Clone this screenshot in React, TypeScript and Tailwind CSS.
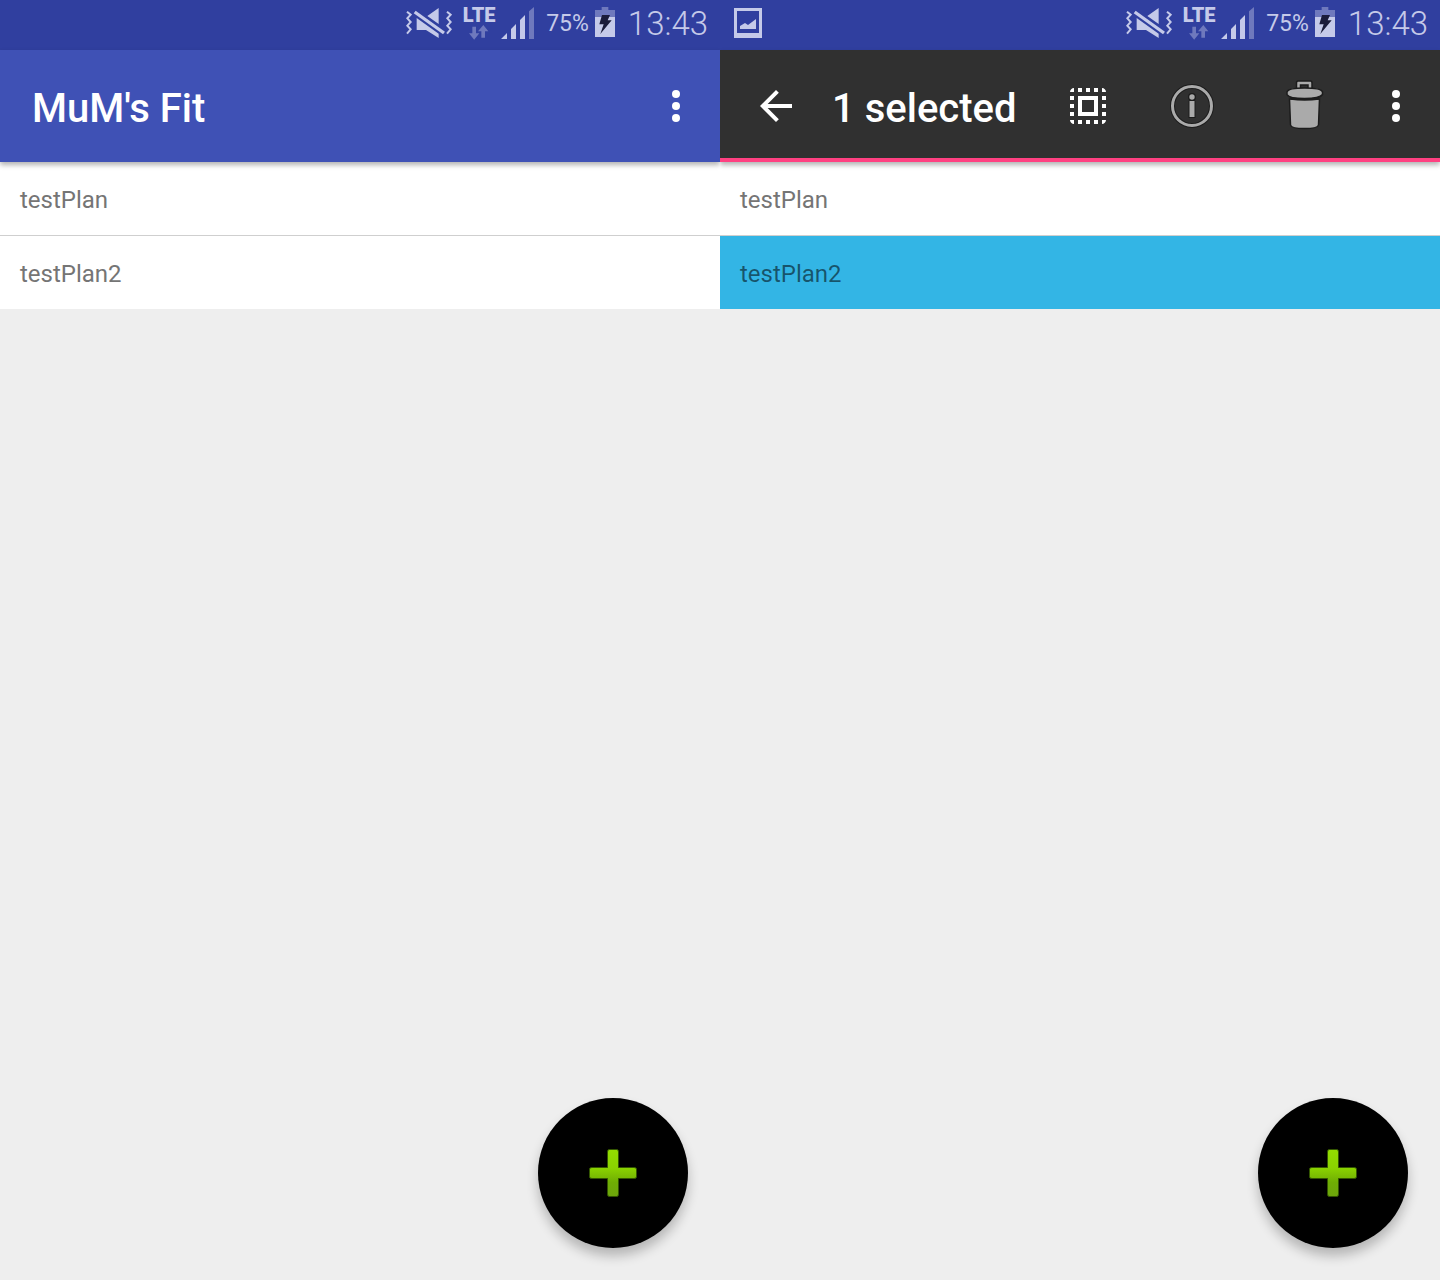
import React from "react";

function MuteIcon() {
  return (
    <svg className="h-[30px] w-[46px] shrink-0" viewBox="24 24 138 90" aria-label="Silent mode">
      <g fill="none" stroke="#c5cae9" strokeWidth="6">
        <path d="M27 35L38 44L28 55L38 66L28 77L38 88L27 101" />
        <path d="M147 35L158 44L148 55L158 66L148 77L158 88L147 101" />
        <path d="M50 36L138 99" strokeWidth="10" />
      </g>
      <path fill="#c5cae9" d="M88 48L122 24V72ZM56 54L122 101V114L84 90H56Z" />
    </svg>
  );
}

function LteIcon() {
  return (
    <span className="flex w-[34px] shrink-0 flex-col items-center text-xl leading-4 font-black text-[#c5cae9]">
      LTE
      <svg className="mt-[2px] h-[15px] w-5" viewBox="217 77 60 45" aria-hidden="true">
        <path
          fill="#6f79bd"
          d="M227 82H238V102H248L232.500 121L217 102H227ZM254 115H265V96H275L260 77L244 96H254Z"
        />
      </svg>
    </span>
  );
}

function SignalIcon() {
  return (
    <svg className="h-8 w-[33px] shrink-0" viewBox="309 21 99 96" aria-label="Signal strength">
      <path fill="#c5cae9" d="M309 117L327 99V117ZM339 117V87L354 72V117ZM366 117V60L381 45V117Z" />
      <path fill="#6f79bd" d="M393 117V34L408 21V117Z" />
    </svg>
  );
}

function BatteryIcon() {
  return (
    <svg className="h-[30px] w-5 shrink-0" viewBox="165 21 60 90" aria-label="Charging">
      <path fill="#6f79bd" d="M165 30H185V21H205V30H225V51H165Z" />
      <path fill="#c5cae9" d="M165 51H225V111H165Z" />
      <path fill="#1b1c3a" d="M186 45H210L203 61H215L181 102L191 73H178Z" />
    </svg>
  );
}

function PictureIcon() {
  return (
    <svg className="h-[30px] w-7 shrink-0" viewBox="0 0 28 30" aria-label="Screenshot saved">
      <path fill="#c5cae9" fillRule="evenodd" d="M0 0H28V30H0ZM3 3V25H25V3Z" />
      <path fill="#c5cae9" d="M6 21V18L11 15L14 17L22 11V21Z" />
    </svg>
  );
}

function StatusBar({ saved = false }: { saved?: boolean }) {
  return (
    <div className="flex h-[50px] items-center justify-between bg-[#303f9f] pr-3 pl-[14px] pb-1 text-[#c5cae9]">
      <div>{saved && <PictureIcon />}</div>
      <div className="flex items-center">
        <MuteIcon />
        <div className="ml-[10px]"><LteIcon /></div>
        <div className="ml-[5px]"><SignalIcon /></div>
        <span className="ml-3 pt-[2px] text-[23px] font-normal">75%</span>
        <div className="ml-[6px] pb-[2px]"><BatteryIcon /></div>
        <span className="ml-[13px] pt-[2px] text-[33px] leading-10 font-light">13:43</span>
      </div>
    </div>
  );
}

function MoreButton() {
  return (
    <button type="button" aria-label="More options" className="mr-2 flex h-12 w-[72px] shrink-0 items-center justify-center">
      <svg className="h-8 w-2" viewBox="0 0 8 32" fill="white">
        <circle cx="4" cy="4" r="4" />
        <circle cx="4" cy="16" r="4" />
        <circle cx="4" cy="28" r="4" />
      </svg>
    </button>
  );
}

function BackIcon() {
  return (
    <svg className="h-8 w-8" viewBox="4 4 16 16" fill="white">
      <path d="M20 11H7.830l5.590-5.590L12 4l-8 8 8 8 1.410-1.410L7.830 13H20v-2z" />
    </svg>
  );
}

function SelectAllIcon() {
  return (
    <svg className="h-12 w-12" viewBox="0 0 24 24" fill="white">
      <path d="M3 5h2V3c-1.100 0-2 .9-2 2zm0 8h2v-2H3v2zm4 8h2v-2H7v2zM3 9h2V7H3v2zm10-6h-2v2h2V3zm6 0v2h2c0-1.100-.9-2-2-2zM5 21v-2H3c0 1.100.9 2 2 2zm-2-4h2v-2H3v2zM9 3H7v2h2V3zm2 18h2v-2h-2v2zm8-8h2v-2h-2v2zm0 8c1.100 0 2-.9 2-2h-2v2zm0-12h2V7h-2v2zm0 8h2v-2h-2v2zm-4 4h2v-2h-2v2zm0-16h2V3h-2v2zM7 17h10V7H7v10zm2-8h6v6H9V9z" />
    </svg>
  );
}

function InfoIcon() {
  return (
    <svg className="h-12 w-12" viewBox="0 0 48 48" fill="none">
      <circle cx="24" cy="24" r="19.500" stroke="#1c1c1c" strokeWidth="5" />
      <path stroke="#1c1c1c" strokeWidth="7" d="M24 18.500V36" />
      <circle cx="24" cy="15" r="4" fill="#1c1c1c" />
      <circle cx="24" cy="24" r="19.500" stroke="#aaa" strokeWidth="3" />
      <path stroke="#aaa" strokeWidth="5" d="M24 19V35" />
      <circle cx="24" cy="15" r="2.700" fill="#aaa" />
    </svg>
  );
}

function TrashIcon() {
  return (
    <svg className="h-14 w-[42px]" viewBox="-1 2 42 56" fill="#aaa" stroke="#1c1c1c" strokeWidth="1.500">
      <path fillRule="evenodd" d="M12.500 14V7Q12.500 5 14 5H26.500Q28 5 28 7V14ZM16.500 9V12.500H24V9Z" />
      <path d="M5.500 23L6.500 49Q7 52.500 20.500 52.500Q34 52.500 34.500 49L35.500 23Z" />
      <path d="M3 16C4 12.200 13 12 20.500 12S37.500 12.200 38.500 16L38.500 18.500C36 22.500 28 22.500 20.500 22.500S5 22.500 3 18.500Z" />
      <path d="M6.500 22.500Q20.500 24.500 35 22.500" fill="none" strokeWidth="2.500" />
    </svg>
  );
}

function PlusIcon() {
  return (
    <svg className="h-12 w-12" viewBox="0 0 48 48">
      <defs>
        <linearGradient id="plus" x1="0" y1="0" x2="0" y2="1">
          <stop offset="0" stopColor="#93dc00" />
          <stop offset="0.400" stopColor="#8ad200" />
          <stop offset="0.700" stopColor="#6fad04" />
          <stop offset="1" stopColor="#6da50c" />
        </linearGradient>
      </defs>
      <path
        fill="url(#plus)"
        stroke="#335500"
        strokeWidth="1"
        d="M20 .5H28Q29.500 .5 29.500 3V18.500H45Q47.500 18.500 47.500 20V28Q47.500 29.500 45 29.500H29.500V45Q29.500 47.500 28 47.500H20Q18.500 47.500 18.500 45V29.500H3Q.5 29.500 .5 28V20Q.5 18.500 3 18.500H18.500V3Q18.500 .5 20 .5Z"
      />
    </svg>
  );
}

function PlanList({ selected }: { selected?: string }) {
  return (
    <ul className="bg-white text-2xl text-[#757575]">
      {["testPlan", "testPlan2"].map((name) => (
        <li
          key={name}
          className={
            "border-b border-[#cfcfcf] px-5 pt-[22px] pb-[18px] leading-[33px] last:border-b-0 " +
            (name === selected ? "bg-[#33b5e5] text-black/54" : "")
          }
        >
          {name}
        </li>
      ))}
    </ul>
  );
}

function AddButton() {
  return (
    <button
      type="button"
      aria-label="Add plan"
      className="mt-auto mr-8 mb-8 flex size-[150px] items-center justify-center self-end rounded-full bg-black shadow-[0_8px_12px_rgba(0,0,0,0.24)]"
    >
      <PlusIcon />
    </button>
  );
}

export default function App() {
  return (
    <div className="grid min-h-screen grid-cols-2 bg-[#eeeeee] font-['Roboto',sans-serif]">
      <section className="flex flex-col overflow-hidden">
        <StatusBar />
        <header className="relative flex h-28 items-center justify-between bg-[#3f51b5] pl-8 text-white shadow-[0_3px_5px_rgba(0,0,0,0.3)]">
          <h1 className="pt-[6px] text-[40px] leading-12 font-medium">MuM's Fit</h1>
          <MoreButton />
        </header>
        <PlanList />
        <AddButton />
      </section>
      <section className="flex flex-col overflow-hidden">
        <StatusBar saved />
        <header className="relative flex h-28 items-center border-b-4 border-[#ff4081] bg-[#303030] pt-1 text-white shadow-[0_3px_5px_rgba(0,0,0,0.3)]">
          <button type="button" aria-label="Back" className="flex h-12 w-28 shrink-0 items-center justify-center">
            <BackIcon />
          </button>
          <h1 className="flex-1 pt-[6px] text-[40px] leading-12 font-medium whitespace-nowrap">1 selected</h1>
          <div className="flex shrink-0 items-center">
            <button type="button" aria-label="Select all" className="flex w-24 items-center justify-center">
              <SelectAllIcon />
            </button>
            <button type="button" aria-label="Details" className="flex w-28 items-center justify-center">
              <InfoIcon />
            </button>
            <button type="button" aria-label="Delete" className="flex w-28 items-center justify-center">
              <TrashIcon />
            </button>
          </div>
          <MoreButton />
        </header>
        <PlanList selected="testPlan2" />
        <AddButton />
      </section>
    </div>
  );
}
